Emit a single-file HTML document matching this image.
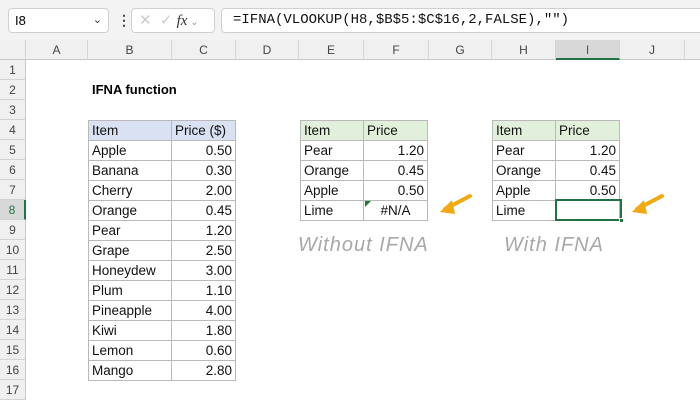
<!DOCTYPE html><html><head><style>
*{margin:0;padding:0;box-sizing:border-box}
body{width:700px;height:400px;overflow:hidden;background:#fff;font-family:"Liberation Sans",sans-serif;position:relative}
.a{position:absolute}
.top{left:0;top:0;width:700px;height:40px;background:#f3f3f3}
.hdr{top:40px;height:20px;background:#f0f0f0;border-bottom:1px solid #c8c8c8}
.ch{position:absolute;top:40px;height:20px;font-size:12px;color:#444;text-align:center;line-height:20px;border-right:1px solid #d4d4d4}
.rh{position:absolute;left:0;width:26px;height:20px;font-size:12px;color:#444;text-align:center;line-height:20px;background:#f0f0f0;border-bottom:1px solid #d4d4d4;border-right:1px solid #c8c8c8}
.c{position:absolute;height:21px;font-size:13.5px;line-height:19px;padding:0 3px;color:#111;border:1px solid #b9b9b9;margin:-1px 0 0 -1px;white-space:nowrap}
.r{text-align:right}
.hw{font-family:"Liberation Sans",sans-serif;font-size:20px;color:#a8a8a8;font-style:italic;letter-spacing:1px}
</style></head><body>
<div class="a top"></div>
<div class="a" style="left:8px;top:8px;width:101px;height:25px;background:#fff;border:1px solid #d0d0d0;border-radius:4px;font-size:13px;line-height:23px;padding-left:6px">I8<span style="position:absolute;right:6px;top:0;font-size:11px;color:#333">&#8964;</span></div>
<div class="a" style="left:117px;top:12px;font-size:14px;color:#444;font-weight:bold">&#8942;</div>
<div class="a" style="left:131px;top:8px;width:84px;height:25px;background:#fff;border:1px solid #d0d0d0;border-radius:4px;font-size:15px;line-height:23px;color:#ccc;padding-left:7px">✕&nbsp;&nbsp;✓ <i style="color:#333;font-family:'Liberation Serif',serif">fx</i><span style="font-size:10px;color:#999"> &#8964;</span></div>
<div class="a" style="left:221px;top:8px;width:485px;height:25px;background:#fff;border:1px solid #d0d0d0;border-radius:4px;font-family:'Liberation Mono',monospace;font-size:14px;line-height:23px;padding-left:11px;color:#111">=IFNA(VLOOKUP(H8,$B$5:$C$16,2,FALSE),"")</div>
<div class="a hdr" style="left:0;width:700px"></div>
<div class="ch" style="left:0;width:26px"></div>
<div class="ch" style="left:26px;width:62px">A</div>
<div class="ch" style="left:88px;width:84px">B</div>
<div class="ch" style="left:172px;width:64px">C</div>
<div class="ch" style="left:236px;width:63px">D</div>
<div class="ch" style="left:299px;width:65px">E</div>
<div class="ch" style="left:364px;width:65px">F</div>
<div class="ch" style="left:429px;width:63px">G</div>
<div class="ch" style="left:492px;width:64px">H</div>
<div class="ch" style="left:556px;width:64px;background:#d8d8d8;border-bottom:2px solid #217346;color:#217346">I</div>
<div class="ch" style="left:620px;width:65px">J</div>
<div class="rh" style="top:60px">1</div><div class="rh" style="top:80px">2</div><div class="rh" style="top:100px">3</div><div class="rh" style="top:120px">4</div><div class="rh" style="top:140px">5</div><div class="rh" style="top:160px">6</div><div class="rh" style="top:180px">7</div><div class="rh" style="top:200px;background:#d8d8d8;color:#217346;border-right:2px solid #217346">8</div><div class="rh" style="top:220px">9</div><div class="rh" style="top:240px">10</div><div class="rh" style="top:260px">11</div><div class="rh" style="top:280px">12</div><div class="rh" style="top:300px">13</div><div class="rh" style="top:320px">14</div><div class="rh" style="top:340px">15</div><div class="rh" style="top:360px">16</div><div class="rh" style="top:380px">17</div>
<div class="a" style="left:92px;top:80px;font-size:13px;font-weight:bold;line-height:20px">IFNA function</div>
<div class="c" style="left:89px;top:121px;width:84px;background:#d9e1f2">Item</div><div class="c" style="left:172px;top:121px;width:65px;background:#d9e1f2">Price ($)</div>
<div class="c" style="left:89px;top:141px;width:84px">Apple</div><div class="c r" style="left:172px;top:141px;width:65px">0.50</div>
<div class="c" style="left:89px;top:161px;width:84px">Banana</div><div class="c r" style="left:172px;top:161px;width:65px">0.30</div>
<div class="c" style="left:89px;top:181px;width:84px">Cherry</div><div class="c r" style="left:172px;top:181px;width:65px">2.00</div>
<div class="c" style="left:89px;top:201px;width:84px">Orange</div><div class="c r" style="left:172px;top:201px;width:65px">0.45</div>
<div class="c" style="left:89px;top:221px;width:84px">Pear</div><div class="c r" style="left:172px;top:221px;width:65px">1.20</div>
<div class="c" style="left:89px;top:241px;width:84px">Grape</div><div class="c r" style="left:172px;top:241px;width:65px">2.50</div>
<div class="c" style="left:89px;top:261px;width:84px">Honeydew</div><div class="c r" style="left:172px;top:261px;width:65px">3.00</div>
<div class="c" style="left:89px;top:281px;width:84px">Plum</div><div class="c r" style="left:172px;top:281px;width:65px">1.10</div>
<div class="c" style="left:89px;top:301px;width:84px">Pineapple</div><div class="c r" style="left:172px;top:301px;width:65px">4.00</div>
<div class="c" style="left:89px;top:321px;width:84px">Kiwi</div><div class="c r" style="left:172px;top:321px;width:65px">1.80</div>
<div class="c" style="left:89px;top:341px;width:84px">Lemon</div><div class="c r" style="left:172px;top:341px;width:65px">0.60</div>
<div class="c" style="left:89px;top:361px;width:84px">Mango</div><div class="c r" style="left:172px;top:361px;width:65px">2.80</div>
<div class="c" style="left:301px;top:121px;width:64px;background:#e2efda">Item</div><div class="c" style="left:364px;top:121px;width:65px;background:#e2efda">Price</div>
<div class="c" style="left:301px;top:141px;width:64px">Pear</div><div class="c r" style="left:364px;top:141px;width:65px">1.20</div>
<div class="c" style="left:301px;top:161px;width:64px">Orange</div><div class="c r" style="left:364px;top:161px;width:65px">0.45</div>
<div class="c" style="left:301px;top:181px;width:64px">Apple</div><div class="c r" style="left:364px;top:181px;width:65px">0.50</div>
<div class="c" style="left:301px;top:201px;width:64px">Lime</div><div class="c" style="left:364px;top:201px;width:65px;text-align:center">#N/A</div>
<div class="a" style="left:365px;top:201px;width:0;height:0;border-top:6px solid #1e7b34;border-right:6px solid transparent"></div>
<div class="c" style="left:493px;top:121px;width:64px;background:#e2efda">Item</div><div class="c" style="left:556px;top:121px;width:65px;background:#e2efda">Price</div>
<div class="c" style="left:493px;top:141px;width:64px">Pear</div><div class="c r" style="left:556px;top:141px;width:65px">1.20</div>
<div class="c" style="left:493px;top:161px;width:64px">Orange</div><div class="c r" style="left:556px;top:161px;width:65px">0.45</div>
<div class="c" style="left:493px;top:181px;width:64px">Apple</div><div class="c r" style="left:556px;top:181px;width:65px">0.50</div>
<div class="c" style="left:493px;top:201px;width:64px">Lime</div><div class="c" style="left:556px;top:201px;width:65px"></div>
<div class="a" style="left:555px;top:199px;width:67px;height:22px;border:2px solid #217346"></div>
<div class="a" style="left:619px;top:218px;width:5px;height:5px;background:#217346;border:1px solid #fff"></div>
<svg class="a" style="left:436px;top:190px" width="40" height="30"><path d="M34 6 L9 19" stroke="#f4a80f" stroke-width="4" stroke-linecap="round"/><path d="M4 22 L16 10 L19 24 Z" fill="#f4a80f"/></svg>
<svg class="a" style="left:628px;top:190px" width="40" height="30"><path d="M34 6 L9 19" stroke="#f4a80f" stroke-width="4" stroke-linecap="round"/><path d="M4 22 L16 10 L19 24 Z" fill="#f4a80f"/></svg>
<div class="a hw" style="left:298px;top:234px">Without IFNA</div>
<div class="a hw" style="left:504px;top:234px">With IFNA</div>
</body></html>
